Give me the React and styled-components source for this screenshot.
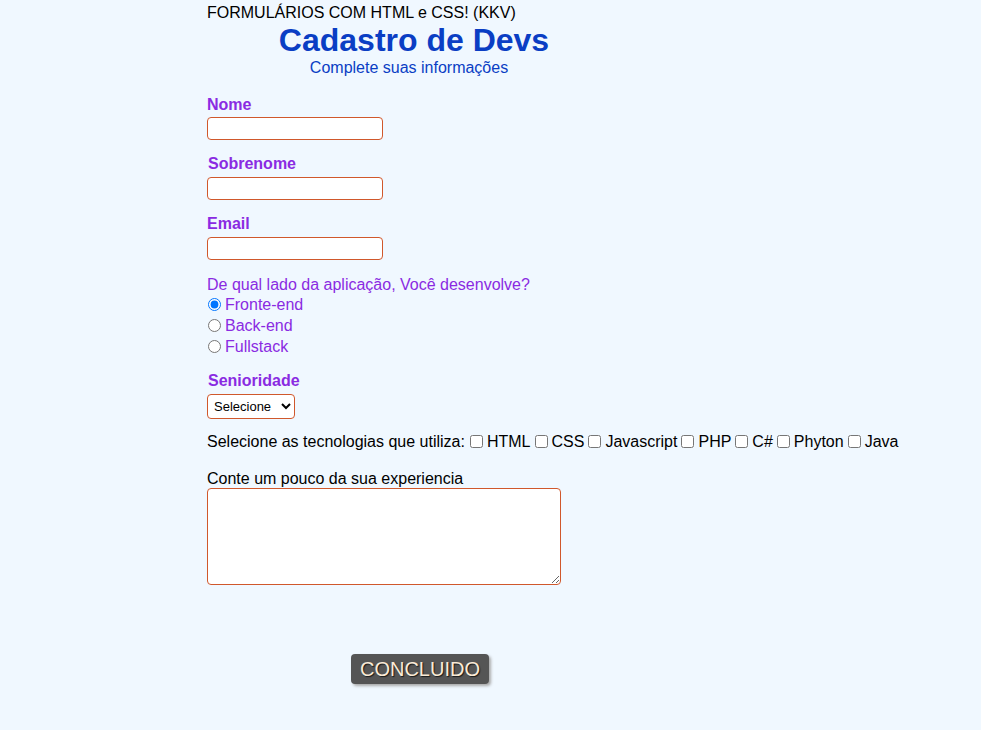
import React from "react";
import styled, { createGlobalStyle } from "styled-components";

const Global = createGlobalStyle`
  html, body {
    margin: 0;
    padding: 0;
    background: #f0f8ff;
    font-family: "Liberation Sans", Arial, sans-serif;
    font-size: 16px;
    color: #000;
  }
`;

const Page = styled.div`
  padding: 4px 0 40px 207px;
  min-height: 686px;
`;

const TopLine = styled.div`
  line-height: 18px;
  height: 18px;
`;

const Header = styled.header`
  width: 414px;
  text-align: center;
`;

const Title = styled.h1`
  margin: 0;
  font-size: 32px;
  line-height: 37px;
  font-weight: bold;
  color: #0a3ec4;
`;

const Subtitle = styled.p`
  margin: 0;
  padding-right: 10px;
  line-height: 18px;
  font-size: 16px;
  color: #0a3ec4;
`;

const Form = styled.form`
  display: flex;
  flex-direction: column;
  align-items: flex-start;
  padding-top: 19px;
`;

const Field = styled.div`
  display: flex;
  flex-direction: column;
  align-items: flex-start;
  margin-bottom: ${(p) => p.$mb ?? 15}px;
`;

const Label = styled.label`
  display: block;
  font-weight: bold;
  color: #8a2be2;
  line-height: 18px;
  margin-left: ${(p) => p.$indent ?? 0}px;
  margin-bottom: ${(p) => p.$gap ?? 4}px;
`;

const TextInput = styled.input`
  box-sizing: border-box;
  width: 176px;
  height: 23px;
  border: 1px solid #d0582c;
  border-radius: 4px;
  background: #fff;
  padding: 0 4px;
  font-family: inherit;
  outline: none;
`;

const Question = styled.p`
  margin: 0;
  color: #8a2be2;
  line-height: 19px;
`;

const RadioRow = styled.label`
  display: flex;
  align-items: center;
  height: 21px;
  color: #8a2be2;
  line-height: 18px;
`;

const Radio = styled.input`
  margin: 0 4px 0 1px;
  width: 13px;
  height: 13px;
`;

const Select = styled.select`
  box-sizing: border-box;
  height: 25px;
  width: 88px;
  border: 1px solid #d0582c;
  border-radius: 4px;
  background: #fff;
  font-family: "Liberation Sans", Arial, sans-serif;
  font-size: 13px;
  color: #000;
  padding: 0 2px;
`;

const TechLine = styled.div`
  display: flex;
  align-items: center;
  flex-wrap: nowrap;
  line-height: 19px;
  margin-top: 13px;
  margin-bottom: 19px;
  white-space: nowrap;
`;

const CheckLabel = styled.label`
  display: inline-flex;
  align-items: center;
`;

const Check = styled.input`
  margin: 0 4px 0 ${(p) => p.$ml ?? 4}px;
  width: 13px;
  height: 13px;
`;

const PlainLabel = styled.label`
  display: block;
  line-height: 18px;
  margin-bottom: 0;
`;

const TextArea = styled.textarea`
  box-sizing: border-box;
  width: 354px;
  height: 97px;
  border: 1px solid #d0582c;
  border-radius: 4px;
  background: #fff;
  font-family: inherit;
  outline: none;
`;

const Submit = styled.button`
  margin: 69px 0 0 144px;
  box-sizing: border-box;
  width: 138px;
  height: 30px;
  background: #555555;
  border: none;
  border-radius: 4px;
  color: #faebd7;
  font-family: "Liberation Sans", Arial, sans-serif;
  font-size: 20px;
  text-shadow: 1px 1px 1px #1a1a1a;
  box-shadow: 2px 2px 3px #aaa;
  padding: 0;
  cursor: pointer;
`;

const techs = ["HTML", "CSS", "Javascript", "PHP", "C#", "Phyton", "Java"];

export default function App() {
  return (
    <>
      <Global />
      <Page>
        <TopLine>FORMULÁRIOS COM HTML e CSS! (KKV)</TopLine>
        <Header>
          <Title>Cadastro de Devs</Title>
          <Subtitle>Complete suas informações</Subtitle>
        </Header>
        <Form onSubmit={(e) => e.preventDefault()}>
          <Field>
            <Label htmlFor="nome" $gap={3}>Nome</Label>
            <TextInput id="nome" type="text" />
          </Field>
          <Field>
            <Label htmlFor="sobrenome" $indent={1}>Sobrenome</Label>
            <TextInput id="sobrenome" type="text" />
          </Field>
          <Field>
            <Label htmlFor="email">Email</Label>
            <TextInput id="email" type="email" />
          </Field>
          <Field $mb={15}>
            <Question>De qual lado da aplicação, Você desenvolve?</Question>
            <RadioRow>
              <Radio type="radio" name="lado" defaultChecked />
              Fronte-end
            </RadioRow>
            <RadioRow>
              <Radio type="radio" name="lado" />
              Back-end
            </RadioRow>
            <RadioRow>
              <Radio type="radio" name="lado" />
              Fullstack
            </RadioRow>
          </Field>
          <Field $mb={0}>
            <Label htmlFor="senioridade" $indent={1}>Senioridade</Label>
            <Select id="senioridade" defaultValue="">
              <option value="">Selecione</option>
              <option value="junior">Júnior</option>
              <option value="pleno">Pleno</option>
              <option value="senior">Sênior</option>
            </Select>
          </Field>
          <TechLine>
            Selecione as tecnologias que utiliza:
            {techs.map((t, i) => (
              <CheckLabel key={t}>
                <Check type="checkbox" $ml={i === 0 ? 5 : 4} />
                {t}
              </CheckLabel>
            ))}
          </TechLine>
          <Field $mb={0}>
            <PlainLabel htmlFor="exp">Conte um pouco da sua experiencia</PlainLabel>
            <TextArea id="exp" />
          </Field>
          <Submit type="submit">CONCLUIDO</Submit>
        </Form>
      </Page>
    </>
  );
}
